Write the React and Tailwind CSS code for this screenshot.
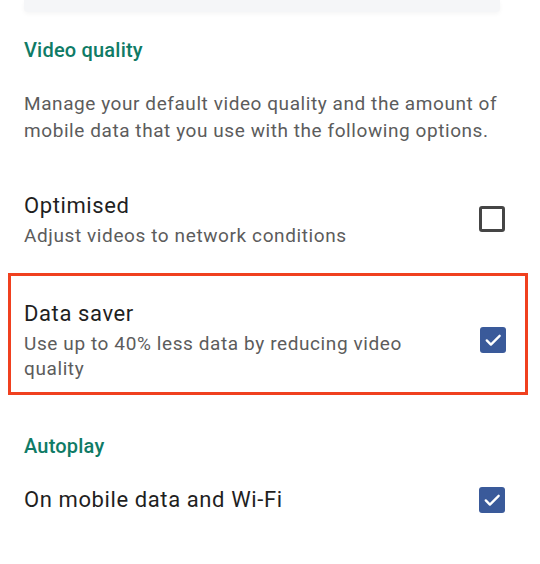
const Checkbox = ({ checked }) =>
  checked ? (
    <div className="w-[26px] h-[26px] rounded-[3px] bg-[#3a5a9a] flex items-center justify-center">
      <svg width="20" height="20" viewBox="0 0 24 24" fill="none">
        <path d="M4.5 12.5l5 5L20 7" stroke="white" strokeWidth="2.8" strokeLinecap="round" strokeLinejoin="round" />
      </svg>
    </div>
  ) : (
    <div className="w-[26px] h-[26px] rounded-[3px] border-[3px] border-[#454545] bg-white" />
  );

const App = () => {
  return (
    <div className="w-[540px] h-[564px] bg-white overflow-hidden font-['Roboto',sans-serif]">
      {/* card above, cut off at the top */}
      <div className="ml-[24px] w-[476px] h-[12px] bg-[#f5f6f8] shadow-[0_2px_4px_rgba(0,0,0,0.04)] rounded-b-[4px]" />

      <h2 className="mt-[24px] px-[24px] text-[20px] leading-[28px] font-medium tracking-[0.2px] text-[#0f7b66]">
        Video quality
      </h2>

      <p className="mt-[26px] px-[24px] text-[19px] leading-[27px] tracking-[0.57px] text-[#5c5c5c]">
        Manage your default video quality and the amount of mobile data that you use with the following options.
      </p>

      <div className="mt-[48px] px-[24px] flex items-center justify-between">
        <div>
          <div className="text-[22px] leading-[28px] tracking-[0.6px] text-[#1f1f1f]">Optimised</div>
          <div className="mt-[3px] text-[19px] leading-[26px] tracking-[0.6px] text-[#5c5c5c]">
            Adjust videos to network conditions
          </div>
        </div>
        <div className="mr-[11px] mb-[4px]">
          <Checkbox />
        </div>
      </div>

      <div className="mt-[24px] mx-[8px] w-[520px] border-[3px] border-[#f0401f] pt-[24px] pb-[11px] pl-[13px] pr-[19px] flex items-center justify-between">
        <div className="w-[420px]">
          <div className="text-[22px] leading-[28px] tracking-[0.6px] text-[#1f1f1f]">Data saver</div>
          <div className="mt-[3px] text-[19px] leading-[25px] tracking-[0.6px] text-[#5c5c5c]">
            Use up to 40% less data by reducing video quality
          </div>
        </div>
        <div className="mb-[2px]">
          <Checkbox checked />
        </div>
      </div>

      <h2 className="mt-[37px] px-[24px] text-[20px] leading-[28px] font-medium tracking-[0.2px] text-[#0f7b66]">
        Autoplay
      </h2>

      <div className="mt-[26px] px-[24px] flex items-center justify-between">
        <div className="text-[22px] leading-[28px] tracking-[0.6px] text-[#1f1f1f]">On mobile data and Wi-Fi</div>
        <div className="mr-[11px]">
          <Checkbox checked />
        </div>
      </div>
    </div>
  );
};

export default App;
